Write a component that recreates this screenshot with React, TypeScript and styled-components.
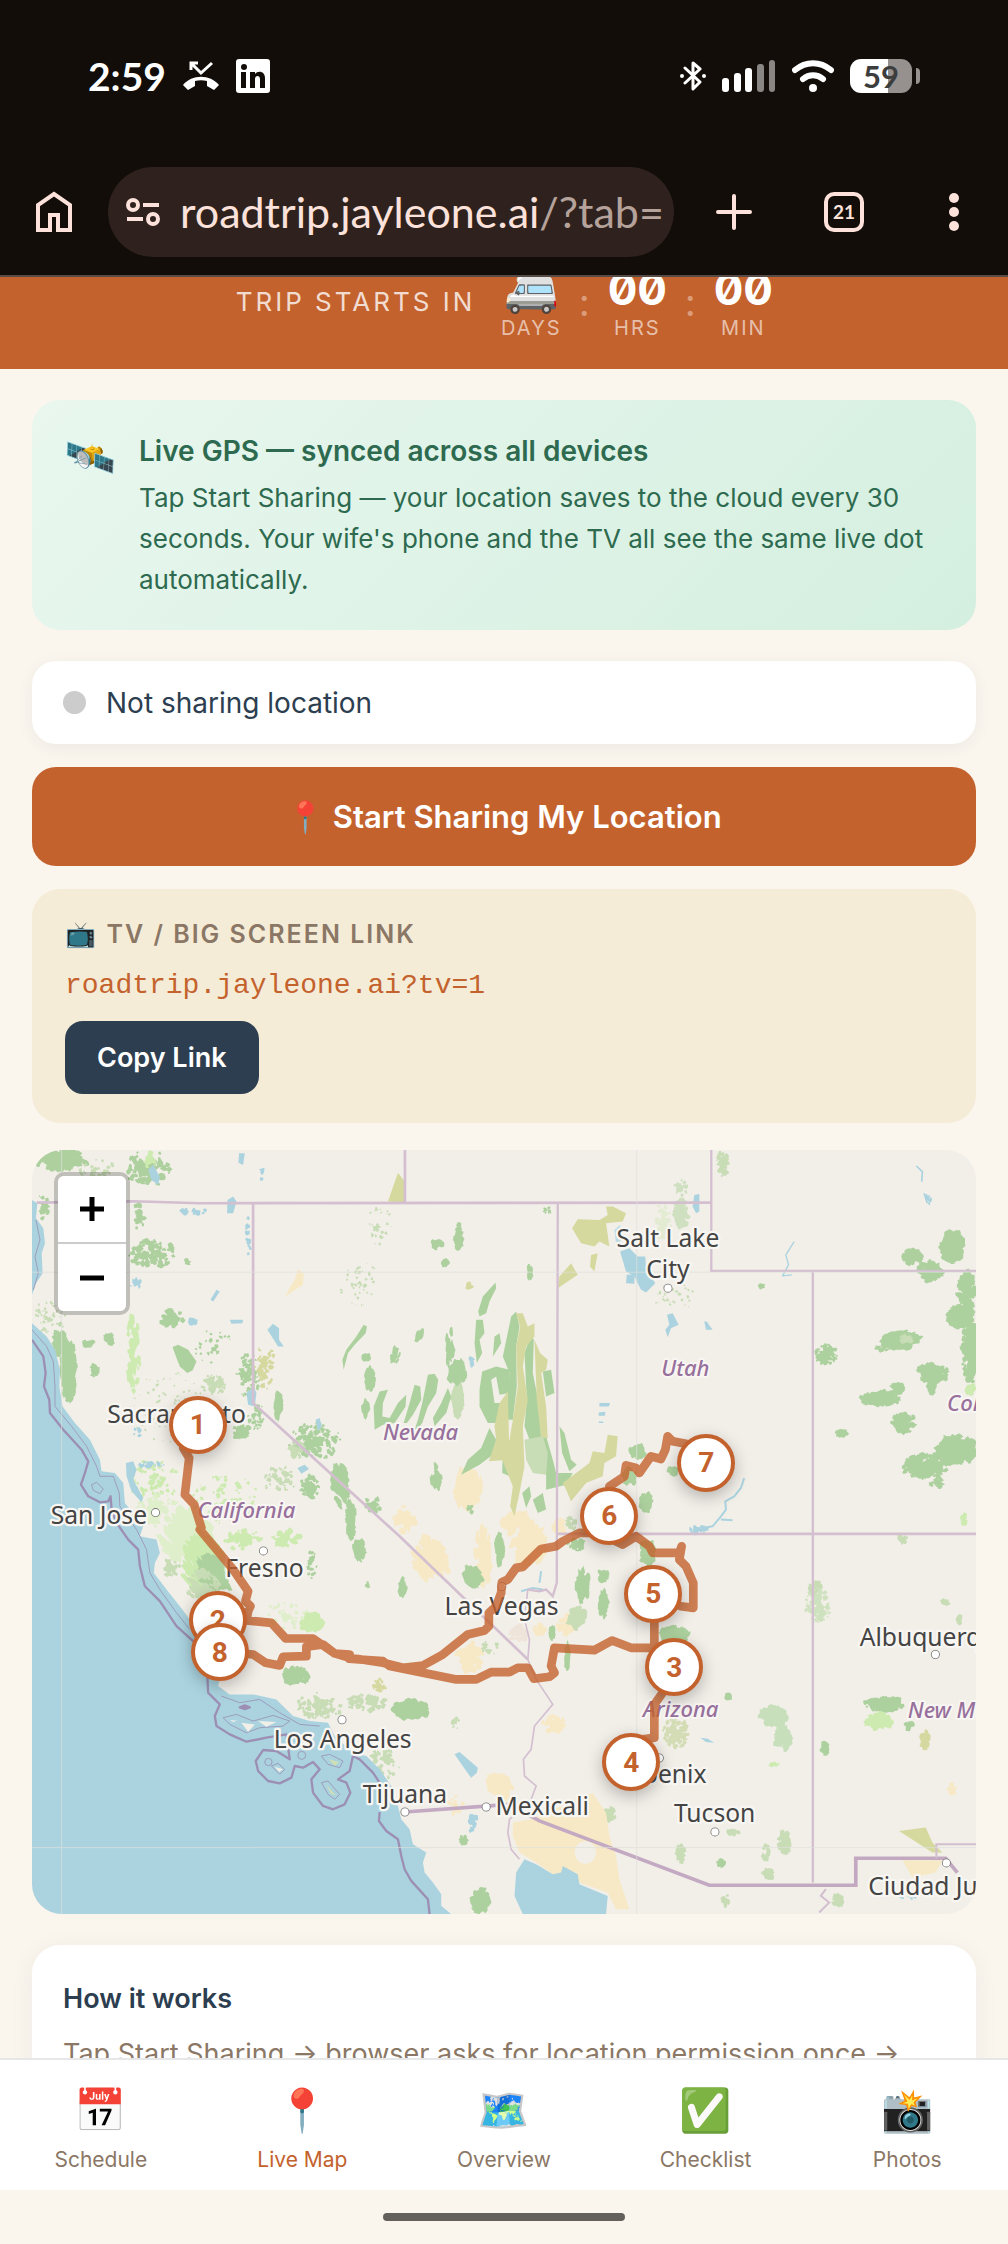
import React from 'react';
import styled, { createGlobalStyle, css } from 'styled-components';

type Point = [number, number];

type Cluster = {
	at: Point;
	spread: Point;
	count: number;
	size: number;
	color: string;
	stretch?: number;
	tilt?: number;
};

const GREEN = '#add19e';
const PALE = '#c8dcb6';
const LIME = '#cdebb0';
const OLIVE = '#d6d99f';
const SAND = '#f7e9c6';
const WATER = '#aad3df';
const BORDER = '#d3bfd0';
const MARITIME = '#9c8fb3';

const clusters: Cluster[] = [
	{ at: [180, 60], spread: [85, 30], count: 46, size: 16, color: GREEN },
	{ at: [290, 110], spread: [70, 50], count: 26, size: 9, color: PALE },
	{ at: [445, 85], spread: [65, 55], count: 34, size: 13, color: GREEN },
	{ at: [450, 60], spread: [15, 30], count: 8, size: 10, color: LIME },
	{ at: [130, 195], spread: [18, 45], count: 10, size: 10, color: GREEN },
	{ at: [420, 225], spread: [18, 50], count: 8, size: 9, color: GREEN },
	{ at: [455, 340], spread: [70, 45], count: 34, size: 13, color: GREEN },
	{ at: [565, 365], spread: [8, 8], count: 3, size: 11, color: GREEN },
	{ at: [180, 600], spread: [18, 50], count: 24, size: 13, color: GREEN },
	{ at: [205, 690], spread: [20, 90], count: 60, size: 14, color: GREEN, stretch: 2 },
	{ at: [150, 530], spread: [50, 50], count: 24, size: 6, color: PALE },
	{ at: [330, 595], spread: [18, 18], count: 8, size: 13, color: GREEN },
	{ at: [265, 610], spread: [18, 10], count: 5, size: 12, color: GREEN },
	{ at: [285, 690], spread: [12, 18], count: 5, size: 11, color: GREEN },
	{ at: [400, 640], spread: [20, 120], count: 34, size: 9, color: LIME, stretch: 2 },
	{ at: [500, 800], spread: [110, 110], count: 40, size: 5, color: PALE },
	{ at: [510, 535], spread: [40, 25], count: 14, size: 14, color: GREEN },
	{ at: [640, 620], spread: [60, 50], count: 14, size: 7, color: GREEN },
	{ at: [640, 735], spread: [40, 30], count: 24, size: 9, color: PALE },
	{ at: [745, 710], spread: [40, 70], count: 40, size: 8, color: GREEN },
	{ at: [795, 680], spread: [30, 70], count: 26, size: 9, color: OLIVE },
	{ at: [835, 795], spread: [8, 40], count: 14, size: 11, color: GREEN, stretch: 2 },
	{ at: [725, 875], spread: [26, 22], count: 12, size: 13, color: GREEN },
	{ at: [770, 830], spread: [25, 40], count: 16, size: 8, color: GREEN },
	{ at: [945, 905], spread: [80, 55], count: 50, size: 10, color: GREEN },
	{ at: [890, 930], spread: [30, 25], count: 10, size: 12, color: PALE },
	{ at: [840, 1020], spread: [50, 40], count: 26, size: 8, color: PALE },
	{ at: [930, 1040], spread: [30, 36], count: 20, size: 12, color: GREEN },
	{ at: [1020, 1030], spread: [24, 70], count: 26, size: 12, color: GREEN, stretch: 2, tilt: -35 },
	{ at: [1055, 1140], spread: [12, 60], count: 16, size: 12, color: GREEN, stretch: 2, tilt: -10 },
	{ at: [1120, 1095], spread: [26, 22], count: 9, size: 12, color: GREEN },
	{ at: [460, 1020], spread: [80, 60], count: 34, size: 9, color: LIME },
	{ at: [680, 1080], spread: [100, 80], count: 34, size: 8, color: LIME },
	{ at: [470, 1110], spread: [70, 50], count: 26, size: 12, color: '#dfeecb' },
	{ at: [560, 1190], spread: [80, 80], count: 44, size: 17, color: '#dfeecb', tilt: -40, stretch: 2 },
	{ at: [610, 1270], spread: [60, 90], count: 40, size: 16, color: LIME, tilt: -40, stretch: 3 },
	{ at: [640, 1310], spread: [40, 60], count: 22, size: 14, color: GREEN, tilt: -40, stretch: 3 },
	{ at: [510, 1280], spread: [30, 30], count: 16, size: 9, color: PALE },
	{ at: [610, 1350], spread: [50, 60], count: 30, size: 10, color: PALE, tilt: -40, stretch: 2 },
	{ at: [730, 1200], spread: [60, 30], count: 22, size: 11, color: LIME },
	{ at: [860, 1200], spread: [40, 30], count: 14, size: 15, color: LIME },
	{ at: [1140, 260], spread: [40, 60], count: 14, size: 6, color: PALE },
	{ at: [1080, 430], spread: [60, 70], count: 20, size: 6, color: PALE },
	{ at: [1378, 290], spread: [8, 38], count: 14, size: 14, color: GREEN },
	{ at: [1312, 312], spread: [22, 14], count: 6, size: 11, color: GREEN },
	{ at: [1335, 368], spread: [6, 8], count: 3, size: 11, color: GREEN },
	{ at: [1410, 438], spread: [12, 10], count: 5, size: 11, color: OLIVE },
	{ at: [1350, 620], spread: [14, 60], count: 14, size: 7, color: GREEN, stretch: 3 },
	{ at: [1260, 585], spread: [12, 20], count: 5, size: 8, color: GREEN, stretch: 2, tilt: 35 },
	{ at: [1100, 650], spread: [12, 12], count: 4, size: 11, color: GREEN },
	{ at: [1110, 720], spread: [12, 30], count: 10, size: 12, color: GREEN, stretch: 2 },
	{ at: [1098, 810], spread: [6, 26], count: 6, size: 10, color: GREEN, stretch: 2 },
	{ at: [1185, 645], spread: [14, 24], count: 6, size: 10, color: GREEN, stretch: 2, tilt: 20 },
	{ at: [1375, 700], spread: [24, 24], count: 12, size: 17, color: GREEN, stretch: 2 },
	{ at: [1375, 780], spread: [14, 50], count: 16, size: 14, color: PALE, stretch: 2 },
	{ at: [1310, 1010], spread: [14, 34], count: 8, size: 12, color: GREEN, stretch: 2, tilt: -20 },
	{ at: [1405, 1050], spread: [40, 60], count: 36, size: 16, color: SAND, stretch: 2 },
	{ at: [1215, 1140], spread: [35, 40], count: 16, size: 16, color: SAND },
	{ at: [1290, 1260], spread: [50, 66], count: 34, size: 17, color: SAND, stretch: 2, tilt: -40 },
	{ at: [1450, 1250], spread: [25, 80], count: 22, size: 13, color: SAND, stretch: 3 },
	{ at: [1410, 1110], spread: [8, 20], count: 5, size: 10, color: GREEN },
	{ at: [1420, 1310], spread: [22, 24], count: 14, size: 15, color: GREEN, tilt: -40, stretch: 2 },
	{ at: [1500, 1230], spread: [10, 44], count: 9, size: 12, color: GREEN, stretch: 3 },
	{ at: [1207, 1345], spread: [4, 22], count: 6, size: 12, color: GREEN, stretch: 2 },
	{ at: [1080, 1235], spread: [12, 34], count: 10, size: 12, color: GREEN, tilt: -25, stretch: 2 },
	{ at: [935, 1270], spread: [16, 50], count: 12, size: 8, color: GREEN },
	{ at: [1105, 1335], spread: [8, 8], count: 3, size: 9, color: GREEN },
	{ at: [935, 1448], spread: [32, 24], count: 24, size: 18, color: LIME },
	{ at: [860, 1430], spread: [70, 40], count: 20, size: 9, color: '#dfeecb' },
	{ at: [888, 1610], spread: [38, 26], count: 40, size: 15, color: GREEN },
	{ at: [960, 1700], spread: [70, 40], count: 34, size: 10, color: PALE },
	{ at: [1100, 1690], spread: [70, 26], count: 26, size: 11, color: PALE },
	{ at: [1235, 1710], spread: [54, 26], count: 44, size: 17, color: GREEN },
	{ at: [1150, 1870], spread: [50, 60], count: 24, size: 10, color: PALE },
	{ at: [1140, 1640], spread: [20, 22], count: 8, size: 10, color: OLIVE },
	{ at: [1365, 1750], spread: [14, 20], count: 6, size: 8, color: PALE },
	{ at: [1410, 1550], spread: [40, 46], count: 30, size: 15, color: SAND },
	{ at: [1500, 1940], spread: [34, 34], count: 18, size: 16, color: SAND, tilt: -40, stretch: 2 },
	{ at: [1370, 2000], spread: [30, 30], count: 9, size: 9, color: SAND },
	{ at: [1392, 2100], spread: [9, 12], count: 8, size: 12, color: GREEN },
	{ at: [1445, 2285], spread: [28, 38], count: 34, size: 14, color: GREEN },
	{ at: [1470, 1525], spread: [30, 20], count: 9, size: 8, color: PALE },
	{ at: [1645, 215], spread: [12, 12], count: 4, size: 8, color: GREEN },
	{ at: [2170, 70], spread: [18, 40], count: 24, size: 10, color: PALE },
	{ at: [2045, 220], spread: [20, 45], count: 26, size: 14, color: '#cfe0c0' },
	{ at: [1990, 250], spread: [25, 60], count: 18, size: 10, color: '#e3ecd2' },
	{ at: [2045, 140], spread: [20, 30], count: 10, size: 8, color: '#cfe0c0' },
	{ at: [2030, 470], spread: [70, 40], count: 16, size: 5, color: PALE },
	{ at: [2290, 440], spread: [8, 6], count: 4, size: 11, color: GREEN },
	{ at: [1592, 400], spread: [6, 20], count: 6, size: 9, color: GREEN, stretch: 2 },
	{ at: [2860, 320], spread: [34, 46], count: 60, size: 18, color: GREEN },
	{ at: [2740, 350], spread: [26, 22], count: 24, size: 15, color: GREEN },
	{ at: [2795, 395], spread: [36, 30], count: 34, size: 15, color: GREEN },
	{ at: [2905, 450], spread: [26, 60], count: 34, size: 16, color: GREEN },
	{ at: [2885, 530], spread: [42, 30], count: 40, size: 17, color: GREEN },
	{ at: [2920, 640], spread: [30, 90], count: 56, size: 17, color: GREEN },
	{ at: [2705, 602], spread: [54, 26], count: 50, size: 12, color: GREEN, tilt: 60, stretch: 2 },
	{ at: [2720, 600], spread: [20, 12], count: 8, size: 10, color: PALE },
	{ at: [2645, 627], spread: [30, 8], count: 10, size: 7, color: GREEN },
	{ at: [2480, 645], spread: [34, 30], count: 38, size: 10, color: GREEN },
	{ at: [2800, 700], spread: [46, 28], count: 44, size: 14, color: GREEN },
	{ at: [2798, 745], spread: [10, 18], count: 10, size: 13, color: GREEN },
	{ at: [2645, 777], spread: [62, 22], count: 46, size: 12, color: GREEN },
	{ at: [2695, 745], spread: [20, 16], count: 12, size: 12, color: GREEN },
	{ at: [2715, 850], spread: [36, 30], count: 36, size: 13, color: GREEN },
	{ at: [2525, 880], spread: [20, 7], count: 9, size: 12, color: GREEN },
	{ at: [2870, 930], spread: [64, 42], count: 64, size: 17, color: GREEN },
	{ at: [2780, 980], spread: [68, 36], count: 56, size: 14, color: GREEN },
	{ at: [2815, 1030], spread: [24, 12], count: 9, size: 10, color: GREEN },
	{ at: [2915, 750], spread: [12, 12], count: 8, size: 13, color: LIME },
	{ at: [2895, 1140], spread: [6, 20], count: 8, size: 10, color: LIME },
	{ at: [1940, 1085], spread: [14, 30], count: 24, size: 14, color: GREEN },
	{ at: [1915, 935], spread: [22, 20], count: 16, size: 15, color: GREEN },
	{ at: [1890, 1010], spread: [20, 26], count: 14, size: 13, color: GREEN },
	{ at: [2020, 995], spread: [16, 14], count: 8, size: 12, color: GREEN },
	{ at: [1715, 1150], spread: [20, 20], count: 8, size: 10, color: PALE },
	{ at: [1550, 1150], spread: [50, 30], count: 14, size: 15, color: SAND, tilt: 40, stretch: 2 },
	{ at: [1680, 1160], spread: [20, 26], count: 12, size: 15, color: SAND },
	{ at: [1590, 1220], spread: [50, 56], count: 30, size: 17, color: SAND, stretch: 2, tilt: 30 },
	{ at: [1620, 1470], spread: [18, 14], count: 10, size: 13, color: SAND },
	{ at: [1700, 1455], spread: [28, 28], count: 20, size: 14, color: SAND },
	{ at: [1560, 1480], spread: [30, 26], count: 12, size: 13, color: '#efe4da' },
	{ at: [1730, 1215], spread: [26, 18], count: 14, size: 12, color: GREEN },
	{ at: [1750, 1340], spread: [20, 50], count: 26, size: 11, color: GREEN, stretch: 2 },
	{ at: [1812, 1310], spread: [16, 18], count: 12, size: 13, color: GREEN },
	{ at: [1813, 1395], spread: [10, 40], count: 18, size: 13, color: GREEN, stretch: 2 },
	{ at: [1730, 1435], spread: [24, 34], count: 22, size: 16, color: PALE },
	{ at: [1657, 1480], spread: [6, 20], count: 6, size: 9, color: GREEN, stretch: 2 },
	{ at: [1705, 1550], spread: [5, 46], count: 10, size: 9, color: GREEN, stretch: 3 },
	{ at: [1945, 1240], spread: [20, 44], count: 30, size: 14, color: GREEN },
	{ at: [2025, 1485], spread: [42, 20], count: 38, size: 17, color: GREEN },
	{ at: [2450, 1350], spread: [20, 24], count: 26, size: 10, color: PALE },
	{ at: [2455, 1400], spread: [40, 54], count: 44, size: 9, color: '#cfe2bf' },
	{ at: [1660, 1755], spread: [34, 28], count: 14, size: 13, color: SAND },
	{ at: [2030, 1780], spread: [40, 46], count: 50, size: 9, color: '#d3dcb4' },
	{ at: [2325, 1730], spread: [40, 28], count: 44, size: 16, color: '#c7dfbb' },
	{ at: [2350, 1795], spread: [24, 38], count: 32, size: 14, color: '#c7dfbb' },
	{ at: [2188, 1670], spread: [6, 10], count: 6, size: 10, color: GREEN },
	{ at: [2477, 1828], spread: [10, 18], count: 10, size: 12, color: GREEN },
	{ at: [2655, 1695], spread: [58, 20], count: 44, size: 14, color: GREEN },
	{ at: [2640, 1745], spread: [40, 22], count: 30, size: 15, color: LIME },
	{ at: [2730, 1760], spread: [12, 12], count: 8, size: 11, color: GREEN },
	{ at: [2777, 1800], spread: [12, 28], count: 18, size: 12, color: OLIVE },
	{ at: [2835, 1390], spread: [16, 8], count: 5, size: 9, color: PALE },
	{ at: [2880, 1440], spread: [8, 16], count: 6, size: 9, color: PALE },
	{ at: [2710, 1200], spread: [16, 12], count: 7, size: 11, color: PALE },
	{ at: [1830, 2025], spread: [18, 20], count: 14, size: 12, color: PALE },
	{ at: [2045, 2140], spread: [12, 34], count: 12, size: 12, color: PALE },
	{ at: [2355, 2110], spread: [16, 40], count: 24, size: 12, color: PALE },
	{ at: [2200, 2080], spread: [20, 7], count: 7, size: 9, color: PALE },
	{ at: [2165, 2170], spread: [10, 10], count: 6, size: 11, color: GREEN },
	{ at: [2300, 2140], spread: [12, 24], count: 9, size: 9, color: PALE },
	{ at: [2305, 2205], spread: [18, 14], count: 9, size: 12, color: PALE },
	{ at: [2180, 2285], spread: [12, 20], count: 6, size: 9, color: PALE },
	{ at: [2515, 2285], spread: [18, 18], count: 12, size: 12, color: PALE },
	{ at: [2860, 1950], spread: [10, 20], count: 7, size: 11, color: SAND },
	{ at: [2320, 1875], spread: [20, 4], count: 6, size: 8, color: LIME },
	{ at: [585, 215], spread: [60, 10], count: 5, size: 9, color: WATER },
	{ at: [745, 290], spread: [10, 60], count: 5, size: 8, color: WATER },
	{ at: [785, 100], spread: [6, 30], count: 3, size: 8, color: WATER },
	{ at: [410, 430], spread: [25, 14], count: 8, size: 7, color: WATER },
	{ at: [580, 545], spread: [14, 8], count: 4, size: 10, color: WATER },
	{ at: [440, 975], spread: [60, 8], count: 14, size: 8, color: WATER },
	{ at: [415, 875], spread: [14, 16], count: 4, size: 7, color: WATER },
	{ at: [1417, 660], spread: [3, 26], count: 3, size: 9, color: WATER },
	{ at: [2100, 1172], spread: [30, 12], count: 9, size: 9, color: WATER },
	{ at: [2785, 180], spread: [12, 16], count: 5, size: 7, color: WATER },
	{ at: [1425, 2050], spread: [18, 26], count: 5, size: 13, color: WATER },
	{ at: [2730, 2270], spread: [80, 10], count: 4, size: 7, color: WATER },
];

// small seeded generator so the ground cover is the same on every render
const randomFrom = (seed: number) => () => {
	seed = (seed * 16807) % 2147483647;
	return seed / 2147483647;
};

const clusterPath = ({ at, spread, count, size, stretch = 1, tilt = 0 }: Cluster) => {
	const random = randomFrom(at[0] * 31 + at[1] * 17 + 7);
	const angle = (tilt * Math.PI) / 180;
	let path = '';
	for (let i = 0; i < count * 2; i++) {
		const turn = random() * Math.PI * 2;
		const reach = Math.pow(random(), 0.6);
		const cx = at[0] + Math.cos(turn) * spread[0] * reach;
		const cy = at[1] + Math.sin(turn) * spread[1] * reach;
		const scale = size * (1.2 - reach * 0.6) * (0.4 + random() * 0.7);
		for (let k = 0; k < 9; k++) {
			const a = (k / 9) * Math.PI * 2;
			const r = scale * (0.6 + random() * 0.7);
			const dx = Math.cos(a) * r;
			const dy = Math.sin(a) * r * stretch;
			const x = cx + dx * Math.cos(angle) - dy * Math.sin(angle);
			const y = cy + dx * Math.sin(angle) + dy * Math.cos(angle);
			path += `${k ? 'L' : 'M'}${x.toFixed(0)} ${y.toFixed(0)}`;
		}
		path += 'Z';
	}
	return path;
};

const stops = [
	{ name: '1', x: 166, y: 275 },
	{ name: '2', x: 186, y: 471 },
	{ name: '3', x: 643, y: 518 },
	{ name: '4', x: 600, y: 613 },
	{ name: '5', x: 622, y: 444 },
	{ name: '6', x: 578, y: 366 },
	{ name: '7', x: 675, y: 313 },
	{ name: '8', x: 188, y: 503 },
];

const cities = [
	{ name: 'Sacramento', x: 530, y: 850 },
	{ name: 'San Jose', x: 297, y: 1152, dot: [467, 1119] },
	{ name: 'Fresno', x: 794, y: 1312, dot: [791, 1234] },
	{ name: 'Las Vegas', x: 1506, y: 1428, dot: [1507, 1341] },
	{ name: 'Los Angeles', x: 1029, y: 1825, dot: [1027, 1741] },
	{ name: 'Tijuana', x: 1216, y: 1992, dot: [1216, 2018] },
	{ name: 'Mexicali', x: 1628, y: 2028, dot: [1460, 2003] },
	{ name: 'Salt Lake', x: 2006, y: 322 },
	{ name: 'City', x: 2006, y: 414, dot: [2006, 445] },
	{ name: 'Phoenix', x: 1981, y: 1931, dot: [1980, 1856] },
	{ name: 'Tucson', x: 2146, y: 2049, dot: [2147, 2078] },
	{ name: 'Albuquerque', x: 2808, y: 1520, dot: [2809, 1545] },
	{ name: 'Ciudad Juárez', x: 2845, y: 2266, dot: [2842, 2171] },
];

const states = [
	{ name: 'Nevada', x: 1263, y: 901 },
	{ name: 'California', x: 740, y: 1136 },
	{ name: 'Utah', x: 2058, y: 709 },
	{ name: 'Colorado', x: 2980, y: 814 },
	{ name: 'Arizona', x: 2044, y: 1734 },
	{ name: 'New Mexico', x: 2904, y: 1735 },
];

const tabs = [
	{ icon: '📅', label: 'Schedule' },
	{ icon: '📍', label: 'Live Map', active: true },
	{ icon: '🗺️', label: 'Overview' },
	{ icon: '✅', label: 'Checklist' },
	{ icon: '📸', label: 'Photos' },
];

const RouteMap = () => (
	<MapSvg viewBox="96 30 2835 2295" preserveAspectRatio="xMidYMid slice" aria-hidden="true">
		<rect x="96" y="30" width="2835" height="2295" fill="#f2efe9" />
		{clusters.map(c => (
			<path key={`${c.at}`} d={clusterPath(c)} fill={c.color} />
		))}
		{/* ranges and plains with a shape of their own */}
		<g fill={GREEN}>
			<path d="M518 622L535 615 565 630 590 665 578 692 562 700 540 680 530 655Z" />
			<path d="M1028 660L1040 630 1070 590 1092 555 1102 560 1098 580 1065 615 1045 640 1032 690Z" />
			<path d="M1436 515L1450 470 1488 428 1490 445 1470 485 1460 520 1440 530Z" />
			<path d="M1430 540L1450 540 1455 580 1440 600 1448 640 1432 670 1425 610Z" />
			<path d="M1485 590L1500 580 1505 610 1480 650Z" />
			<path d="M1125 870L1122 800 1140 755 1165 750 1150 790 1148 830 1170 835 1195 790 1220 765 1218 800 1185 850 1150 855Z" />
			<path d="M1212 850L1230 790 1245 735 1262 740 1265 780 1240 825 1222 850Z" />
			<path d="M1255 840L1268 790 1285 705 1305 702 1316 720 1310 760 1285 800 1268 850 1240 885Z" />
			<path d="M1300 835L1325 790 1345 745 1355 770 1340 820 1305 860Z" />
			<path d="M1440 750L1448 695 1490 680 1530 690 1530 760 1500 765 1490 710 1475 720 1485 790 1510 790 1490 850 1465 850 1440 800Z" />
			<path d="M1385 1005L1405 960 1445 925 1470 865 1490 900 1480 945 1440 975Z" />
			<path d="M1535 530L1550 515 1560 560 1550 620 1552 740 1540 840 1520 840 1530 700 1510 650Z" />
			<path d="M1575 640L1595 585 1603 600 1600 700 1620 800 1625 900 1590 900 1575 860 1582 780Z" />
			<path d="M1630 695L1655 690 1665 760 1640 770Z" />
			<path d="M1610 895L1640 890 1660 960 1670 1000 1720 1000 1700 1035 1640 1050 1640 1005Z" />
			<path d="M1680 860L1695 880 1715 960 1732 975 1710 995 1688 940Z" />
			<path d="M1568 1060L1590 1040 1595 1070 1580 1105Z" />
			<path d="M1600 1080L1630 1060 1640 1110 1615 1120Z" />
			<path d="M1510 940L1530 960 1530 1010 1508 1000Z" />
		</g>
		<g fill={OLIVE}>
			<path d="M1165 185L1195 98 1216 125 1216 188Z" />
			<path d="M1550 520L1570 520 1585 560 1605 550 1605 590 1580 620 1570 680 1585 780 1570 860 1575 980 1560 1060 1545 1130 1532 1100 1540 1040 1500 940 1530 900 1540 840 1555 740 1550 620 1562 560Z" />
			<path d="M1605 600L1622 640 1645 660 1640 690 1625 700 1640 800 1645 895 1625 895 1612 780Z" />
			<path d="M1485 860L1500 790 1525 755 1530 960 1468 965 1490 900Z" />
			<path d="M1718 265L1735 238 1800 240 1825 225 1820 200 1840 200 1880 220 1870 245 1820 250 1830 320 1800 305 1785 320 1745 310Z" />
			<path d="M1675 445L1680 410 1715 370 1735 405Z" />
			<path d="M1775 345L1795 340 1785 395 1772 380Z" />
			<path d="M1690 1030L1770 970 1780 935 1815 940 1825 885 1855 890 1850 950 1815 970 1810 1010 1760 1030 1715 1085 1700 1050Z" />
			<path d="M2700 2075L2780 2065 2800 2110 2830 2140 2800 2140Z" />
		</g>
		<path fill={PALE} d="M1575 900L1630 890 1645 940 1640 1005 1600 1000 1580 960Z" />
		<g fill={SAND}>
			<path d="M855 470L885 420 895 388 912 400 910 435Z" />
			<path d="M1540 2050L1595 2040 1780 1960 1820 2020 1830 2090 1850 2150 1860 2220 1890 2310 1850 2310 1825 2260 1740 2230 1730 2200 1660 2205 1610 2170 1560 2140 1540 2090Z" />
			<path d="M1500 1930L1530 1945 1530 1985 1500 1990Z" />
			<path d="M2710 2163L2830 2163 2810 2200 2740 2215Z" />
		</g>
		<ellipse cx="1758" cy="2140" rx="32" ry="34" fill="#f2efe9" />

		<g fill={WATER}>
			<path d="M96 180L112 190 108 235 130 265 135 310 125 340 128 400 108 430 96 465Z" />
			<path d="M96 550L140 590 165 630 180 690 178 740 188 800 225 850 270 900 300 960 305 995 345 1000 370 1030 375 1090 400 1120 430 1160 420 1190 470 1200 480 1240 465 1270 462 1300 500 1350 540 1400 570 1440 600 1480 620 1570 660 1620 655 1640 690 1665 760 1665 830 1680 880 1730 930 1745 985 1750 1005 1790 1060 1840 1100 1850 1140 1890 1175 1940 1195 2000 1205 2040 1230 2070 1240 2115 1280 2140 1270 2170 1275 2200 1300 2230 1325 2265 1325 2300 1355 2325 96 2325Z" />
			<path d="M378 970L400 965 410 990 400 1020 430 1075 425 1088 395 1055 380 1010Z" />
			<path d="M740 760L762 742 770 760 765 800 745 795Z" />
			<path d="M683 180L700 170 710 185 700 220 682 220Z" />
			<path d="M718 40L735 40 730 75 716 68Z" />
			<path d="M445 90L460 75 480 110 475 135 455 120Z" />
			<path d="M803 570L820 552 838 565 838 600 852 620 835 620Z" />
			<path d="M690 540L730 540 728 550 695 552Z" />
			<path d="M640 485L632 480 650 450 660 455 650 470Z" />
			<path d="M893 985L915 975 928 988 905 1002Z" />
			<path d="M948 840L960 835 966 860 955 875Z" />
			<path d="M1862 335L1890 325 1915 350 1938 350 1940 390 1968 430 1940 458 1925 450 1905 410 1880 395Z" />
			<path d="M1845 270L1862 255 1870 300 1850 310Z" opacity=".7" />
			<path d="M1882 405L1905 405 1905 432 1880 430Z" />
			<path d="M2003 525L2020 520 2038 555 2015 565 2005 592 1998 570 2010 555Z" />
			<path d="M2085 165L2100 162 2100 215 2090 220 2080 200Z" />
			<path d="M2115 545L2122 545 2140 570 2120 570Z" />
			<path d="M1800 790L1832 790 1828 800 1800 800ZM1798 818L1818 816 1816 828 1798 828ZM1798 845L1812 845 1812 850 1798 850Z" />
			<path d="M1365 1845L1380 1838 1435 1885 1432 1900 1415 1915 1400 1895Z" />
			<path d="M1575 2160L1610 2175 1660 2205 1685 2200 1690 2180 1735 2205 1740 2235 1825 2270 1820 2325 1570 2325 1545 2270 1550 2200Z" />
			<path d="M2103 1795L2125 1798 2145 1810 2120 1808Z" />
		</g>
		<g fill="none" stroke={WATER} strokeWidth="6" strokeLinejoin="round">
			<path d="M2080 1180L2110 1165 2140 1160 2165 1130 2180 1110 2178 1085 2205 1070 2225 1045 2235 1015M2165 1140L2200 1142" />
			<path d="M2385 305L2360 345 2368 375 2350 408 2378 405" strokeWidth="4" />
			<path d="M2752 78L2770 95 2768 125M2775 160L2785 190" strokeWidth="5" />
			<path d="M1625 1295L1620 1330M1565 1355L1600 1345 1630 1350" />
		</g>

		<g fill="none" stroke={MARITIME} strokeWidth="7" strokeLinejoin="round">
			<path d="M96 600L130 650 137 700 132 740 148 780 150 820 190 870 245 930 265 965 255 1000 243 1035 265 1070 300 1088 325 1085 332 1070 335 1110 350 1150 385 1200 415 1230 420 1280 435 1340 480 1385 530 1460 580 1505 620 1560 625 1660 660 1695 645 1730 650 1760 690 1785 740 1807 800 1795 860 1785 870 1860 830 1835 790 1832 768 1865 775 1895 805 1925 840 1932 875 1915 885 1880 910 1885 940 1868 960 1890 935 1920 940 1960 970 2000 1000 2010 1035 1995 1052 1960 1040 1930 1015 1920 1050 1895 1060 1850 1080 1860 1120 1900 1140 1930" />
			<path d="M1140 2018L1138 2045 1160 2075 1195 2100 1205 2150 1215 2190 1235 2225 1285 2280 1290 2325" />
			<path d="M720 1704L735 1698 750 1704 735 1709Z" fill={MARITIME} />
		</g>
		<g fill="none" stroke={MARITIME} strokeWidth="3" strokeLinejoin="round" opacity=".8">
			<path d="M108 240L120 300 105 350 115 400 100 450M96 570L140 620 160 665 165 740 165 800 215 860 260 920 290 980 300 1010 340 1010 358 1060 360 1100 410 1170 440 1230 450 1300 480 1350 530 1420 570 1470M665 1670L720 1690 780 1680 840 1720 900 1755 960 1760M275 1035L290 1028 310 1048 300 1062 280 1052Z" />
			<path d="M670 1735L710 1725 760 1745 820 1728 870 1745 850 1760 780 1765 740 1780 690 1755ZM965 1850L990 1845 1030 1865 1020 1885 985 1875ZM965 1930L985 1925 1020 1965 1005 1980 985 1965ZM815 1880L835 1872 855 1890 840 1905Z" />
			<circle cx="806" cy="1868" r="11" />
			<circle cx="906" cy="1848" r="12" />
		</g>
		<g fill="#f2efe9">
			<path d="M725 1750L765 1755 745 1778Z" />
			<path d="M775 1745L830 1748 800 1762Z" />
			<path d="M690 1742L712 1744 700 1748ZM825 1882L850 1890 838 1898Z" />
		</g>
		<g fill="#cfe0b4">
			<path d="M988 1860L1018 1868 1005 1880Z" />
			<path d="M978 1935L1008 1968 995 1965Z" />
		</g>

		<g fill="none" stroke={BORDER} strokeWidth="8">
			<path d="M110 188L400 184 600 190 2136 188M1216 30V188M760 188V790L1200 1190 1585 1560" />
			<path d="M2136 30V393H2931M2441 393V2230M1675 190L1672 1330 1660 1370 1640 1350 1620 1355 1585 1350" strokeWidth="7" />
			<path d="M1672 1183H2931" />
			<path d="M1585 1350L1575 1440 1590 1500 1585 1560 1610 1620 1660 1695 1605 1760 1595 1830 1572 1860 1575 1910 1610 1940 1595 1980 1530 2040 1525 2080 1535 2130 1560 2160" strokeWidth="5" />
			<path d="M1215 2018L1530 1995 1620 2045 2130 2238H2570V2157H2840L2875 2200" stroke="#c3a9c2" strokeWidth="11" />
			<path d="M2812 2157V2115H2931M2480 2250L2465 2270 2490 2290 2460 2320" strokeWidth="6" />
		</g>
		<g stroke="#dfe0dc" strokeWidth="3">
			<path d="M96 397H2931M96 2125H2931M185 30V2325M1912 30V2325" opacity=".7" />
		</g>

		<g fontFamily="'Noto Sans', sans-serif" textAnchor="middle" strokeLinejoin="round" paintOrder="stroke">
			{cities.map(city => (
				<g key={city.name}>
					{city.dot && (
						<circle cx={city.dot[0]} cy={city.dot[1]} r="11" fill="#fff" stroke="#777" strokeWidth="5" />
					)}
					<text x={city.x} y={city.y} fontSize="74" fill="#444" stroke="#f8f6f2" strokeWidth="14">
						{city.name}
					</text>
				</g>
			))}
			{states.map(state => (
				<text
					key={state.name}
					x={state.x}
					y={state.y}
					fontSize="66"
					fontStyle="italic"
					fontWeight="500"
					fill="#97709c"
					stroke="#f8f6f2"
					strokeWidth="12"
				>
					{state.name}
				</text>
			))}
		</g>

		<g fill="none" stroke="#c4622d" strokeWidth="26" strokeLinejoin="round" strokeLinecap="round" opacity=".8">
			<path d="M550 925L568 955 555 1065 583 1095 605 1165 600 1170 700 1290 745 1355 737 1385 752 1400 745 1415 740 1443 815 1450 858 1497 940 1497 1005 1542 1050 1545 1048 1558 1150 1565 1170 1580 1370 1620 1430 1620 1475 1598 1530 1598 1555 1585 1585 1585 1603 1618 1650 1612 1665 1600 1655 1580 1665 1525 1785 1532 1838 1503 1895 1525 1965 1525 1965 1370 2045 1400 2082 1405 2082 1330 2060 1280 2040 1260 2047 1220 2040 1240 1960 1240 1950 1220 1910 1190 1870 1215 1800 1180 1740 1180 1690 1205 1670 1220 1625 1228 1570 1282 1550 1285 1525 1320 1507 1328 1505 1360 1490 1400 1468 1420 1468 1460 1455 1473 1405 1485 1330 1545 1270 1578 1210 1585 1150 1570 1050 1555 1005 1542 970 1515 920 1522 920 1550 850 1552 840 1578 798 1570 760 1545 700 1540" />
			<path d="M1965 1525L2025 1585 1990 1660 1965 1695 1965 1795 1930 1800M1830 1040L1875 1010 1880 977 1910 985 1920 1000 1955 950 1985 958 1998 930 2005 890 2020 905 2060 912" />
		</g>
	</MapSvg>
);

const App = () => {
	return (
		<Screen>
			<GlobalStyle />
			<StatusBar>
				<StatusGroup>
					<Clock>2:59</Clock>
					<svg width="38" height="30" viewBox="0 0 38 30" fill="none" aria-label="Missed call">
						<path d="M9 9V2h7M10 3l9 9L30 2" stroke="#fff" strokeWidth="3" />
						<path d="M1 24C10 13 28 13 37 24l-5 5-7-4v-5c-4-1-8-1-12 0v5l-7 4z" fill="#fff" />
					</svg>
					<svg width="34" height="34" viewBox="0 0 34 34" aria-label="LinkedIn">
						<rect width="34" height="34" rx="3" fill="#fff" />
						<g fill="#120d09">
							<circle cx="8" cy="8" r="3" />
							<path d="M5 13h5v16H5zM14 13h5v2c3-4 10-3 10 4v10h-5v-9c0-4-5-4-5 0v9h-5z" />
						</g>
					</svg>
				</StatusGroup>
				<StatusGroup>
					<svg width="26" height="30" viewBox="0 0 26 30" fill="none" aria-label="Bluetooth">
						<path d="M5 7l15 14-7 7V2l7 6L5 22" stroke="#fff" strokeWidth="3" strokeLinejoin="round" strokeLinecap="round" />
						<circle cx="2" cy="15" r="2" fill="#fff" />
						<circle cx="24" cy="15" r="2" fill="#fff" />
					</svg>
					<svg width="54" height="32" viewBox="0 0 54 32" aria-label="Signal">
						<g fill="#fff">
							<rect y="18" width="7" height="14" rx="3" />
							<rect x="12" y="13" width="7" height="19" rx="3" />
							<rect x="23" y="8" width="7" height="24" rx="3" />
							<rect x="35" y="4" width="7" height="28" rx="3" opacity=".5" />
							<rect x="47" width="6" height="32" rx="3" opacity=".5" />
						</g>
					</svg>
					<svg width="42" height="32" viewBox="0 0 42 32" fill="none" aria-label="Wi-Fi">
						<path d="M3 10C14 1 28 1 39 10M11 19c6-5 14-5 20 0" stroke="#fff" strokeWidth="6" strokeLinecap="round" />
						<circle cx="21" cy="28" r="4" fill="#fff" />
					</svg>
					<Battery>
						<BatteryBody>59</BatteryBody>
						<BatteryTip />
					</Battery>
				</StatusGroup>
			</StatusBar>

			<Toolbar>
				<ToolButton aria-label="Home">
					<svg width="36" height="42" viewBox="0 0 36 42" fill="none" stroke="#fce2da" strokeWidth="4">
						<path d="M2 39V14L18 3l16 11v25H22V24h-8v15z" />
					</svg>
				</ToolButton>
				<AddressBar>
					<svg width="34" height="28" viewBox="0 0 34 28" fill="none" stroke="#fce2da" strokeWidth="4">
						<circle cx="7" cy="7" r="5" />
						<circle cx="27" cy="21" r="5" />
						<path d="M17 7h16M1 21h16" />
					</svg>
					<Url>
						roadtrip.jayleone.ai<UrlRest>/?tab=</UrlRest>
					</Url>
				</AddressBar>
				<ToolActions>
					<ActionButton aria-label="New tab">
						<svg width="36" height="36" viewBox="0 0 36 36" stroke="#fce2da" strokeWidth="4" strokeLinecap="round">
							<path d="M18 2v32M2 18h32" />
						</svg>
					</ActionButton>
					<ActionButton aria-label="Open tabs">
						<TabCount>21</TabCount>
					</ActionButton>
					<ActionButton aria-label="Menu">
						<svg width="10" height="38" viewBox="0 0 10 38" fill="#fce2da">
							<circle cx="5" cy="5" r="5" />
							<circle cx="5" cy="19" r="5" />
							<circle cx="5" cy="33" r="5" />
						</svg>
					</ActionButton>
				</ToolActions>
			</Toolbar>

			<Page>
				<Banner>
					<Countdown>
						<CountdownTitle>TRIP STARTS IN</CountdownTitle>
						<Unit>
							<UnitValue>🚐</UnitValue>
							<UnitLabel>DAYS</UnitLabel>
						</Unit>
						<Colon>:</Colon>
						<Unit>
							<UnitValue>00</UnitValue>
							<UnitLabel>HRS</UnitLabel>
						</Unit>
						<Colon>:</Colon>
						<Unit>
							<UnitValue>00</UnitValue>
							<UnitLabel>MIN</UnitLabel>
						</Unit>
					</Countdown>
				</Banner>

				<Content>
					<GpsCard>
						<GpsIcon>🛰️</GpsIcon>
						<div>
							<GpsTitle>Live GPS — synced across all devices</GpsTitle>
							<GpsText>
								Tap Start Sharing — your location saves to the cloud every 30 seconds. Your wife's phone and the TV all
								see the same live dot automatically.
							</GpsText>
						</div>
					</GpsCard>

					<SharingStatus>
						<StatusDot />
						Not sharing location
					</SharingStatus>

					<ShareButton>📍 Start Sharing My Location</ShareButton>

					<TvCard>
						<TvTitle>📺 TV / BIG SCREEN LINK</TvTitle>
						<TvLink href="#tv">roadtrip.jayleone.ai?tv=1</TvLink>
						<CopyButton>Copy Link</CopyButton>
					</TvCard>

					<MapFrame>
						<RouteMap />
						{stops.map(stop => (
							<Marker key={stop.name} $x={stop.x} $y={stop.y}>
								{stop.name}
							</Marker>
						))}
						<ZoomControl>
							<ZoomButton aria-label="Zoom in">
								<svg width="24" height="24" viewBox="0 0 24 24" stroke="#000" strokeWidth="5">
									<path d="M12 0v24M0 12h24" />
								</svg>
							</ZoomButton>
							<ZoomButton aria-label="Zoom out">
								<svg width="24" height="24" viewBox="0 0 24 24" stroke="#000" strokeWidth="5">
									<path d="M0 12h24" />
								</svg>
							</ZoomButton>
						</ZoomControl>
					</MapFrame>

					<HowCard>
						<HowTitle>How it works</HowTitle>
						<HowText>Tap Start Sharing → browser asks for location permission once →</HowText>
					</HowCard>
				</Content>
			</Page>

			<TabBar>
				{tabs.map(tab => (
					<TabItem key={tab.label} $active={tab.active}>
						<TabIcon>{tab.icon}</TabIcon>
						{tab.label}
					</TabItem>
				))}
			</TabBar>
			<GestureArea>
				<GesturePill />
			</GestureArea>
		</Screen>
	);
};

const GlobalStyle = createGlobalStyle`
	* {
		box-sizing: border-box;
	}

	body {
		margin: 0;
		background: #faf5ed;
		font-family: Inter, 'Noto Color Emoji', sans-serif;
	}

	button {
		border: 0;
		padding: 0;
		background: none;
		font-family: inherit;
		cursor: pointer;
	}

	svg {
		display: block;
		flex-shrink: 0;
	}
`;

const Screen = styled.div`
	height: 100vh;
	display: flex;
	flex-direction: column;
`;

const StatusBar = styled.header`
	height: 151px;
	flex-shrink: 0;
	padding: 0 88px;
	display: flex;
	align-items: center;
	justify-content: space-between;
	background: #120d09;
	color: #fff;
	font-family: Lato, sans-serif;
`;

const StatusGroup = styled.div`
	display: flex;
	align-items: center;
	gap: 16px;
`;

const Clock = styled.span`
	font-size: 39px;
	font-weight: 700;
`;

const Battery = styled.div`
	display: flex;
	align-items: center;
	gap: 4px;
`;

const BatteryBody = styled.div`
	width: 62px;
	height: 34px;
	border-radius: 11px;
	background: linear-gradient(90deg, #fff 62%, #96918e 62%);
	color: #3c3d3d;
	font-size: 31px;
	font-weight: 700;
	line-height: 34px;
	text-align: center;
`;

const BatteryTip = styled.div`
	width: 4px;
	height: 16px;
	border-radius: 0 4px 4px 0;
	background: #96918e;
`;

const Toolbar = styled.div`
	height: 126px;
	flex-shrink: 0;
	padding: 16px 30px 18px 36px;
	display: flex;
	align-items: center;
	gap: 36px;
	border-bottom: 2px solid #564b46;
	background: #120d09;
	font-family: Lato, sans-serif;
`;

const ToolButton = styled.button`
	display: flex;
	align-items: center;
	justify-content: center;
`;

const ActionButton = styled(ToolButton)`
	width: 48px;
	height: 48px;
`;

const AddressBar = styled.div`
	flex: 1;
	min-width: 0;
	height: 90px;
	padding: 0 12px 0 18px;
	display: flex;
	align-items: center;
	gap: 20px;
	border-radius: 45px;
	background: #2f221e;
`;

const Url = styled.span`
	overflow: hidden;
	white-space: nowrap;
	color: #fce2da;
	font-size: 43px;
	line-height: 54px;
`;

const UrlRest = styled.span`
	color: #b5a39b;
`;

const ToolActions = styled.div`
	width: 268px;
	display: flex;
	align-items: center;
	justify-content: space-between;
`;

const TabCount = styled.span`
	width: 40px;
	height: 40px;
	border: 4px solid #fce2da;
	border-radius: 10px;
	color: #fce2da;
	font-size: 19px;
	font-weight: 700;
	line-height: 32px;
`;

const Page = styled.main`
	flex: 1;
	min-height: 0;
	overflow: hidden;
`;

const Banner = styled.section`
	height: 92px;
	padding-bottom: 29px;
	display: flex;
	align-items: flex-end;
	justify-content: center;
	overflow: hidden;
	background: #c4622d;
	color: #fff;
`;

const Countdown = styled.div`
	display: flex;
	align-items: center;
	gap: 19px;
`;

const CountdownTitle = styled.span`
	margin-right: 8px;
	color: rgba(255, 255, 255, 0.8);
	font-size: 26px;
	letter-spacing: 3px;
`;

const Unit = styled.div`
	width: 58px;
	display: flex;
	flex-direction: column;
	align-items: center;
`;

const UnitValue = styled.span`
	font-feature-settings: 'zero';
	font-size: 44px;
	font-weight: 700;
	line-height: 54px;
`;

const UnitLabel = styled.span`
	color: rgba(255, 255, 255, 0.6);
	font-size: 20px;
	letter-spacing: 2px;
	line-height: 24px;
`;

const Colon = styled.span`
	width: 10px;
	color: rgba(255, 255, 255, 0.4);
	font-family: Lato, sans-serif;
	font-size: 40px;
	text-align: center;
`;

const Content = styled.div`
	padding: 31px 32px;
	display: flex;
	flex-direction: column;
`;

const GpsCard = styled.section`
	margin-bottom: 31px;
	padding: 31px 32px 30px;
	display: flex;
	gap: 24px;
	border-radius: 28px;
	background: linear-gradient(135deg, #e9f7ef, #d4efdf);
	color: #2d6a4f;
`;

const GpsIcon = styled.span`
	width: 51px;
	font-size: 42px;
	line-height: 52px;
`;

const GpsTitle = styled.h2`
	margin: 0 0 6px;
	font-size: 28px;
	font-weight: 600;
	line-height: 40px;
`;

const GpsText = styled.p`
	margin: 0;
	font-size: 26px;
	line-height: 41px;
`;

const SharingStatus = styled.div`
	height: 83px;
	margin-bottom: 23px;
	padding: 0 31px;
	display: flex;
	align-items: center;
	gap: 20px;
	border-radius: 24px;
	background: #fff;
	box-shadow: 0 4px 16px rgba(44, 62, 80, 0.06);
	color: #2c3e50;
	font-size: 28px;
`;

const StatusDot = styled.span`
	width: 23px;
	height: 23px;
	border-radius: 50%;
	background: #ccc;
`;

const ShareButton = styled.button`
	height: 99px;
	margin-bottom: 23px;
	border-radius: 24px;
	background: #c4622d;
	color: #fff;
	font-size: 31px;
	font-weight: 600;
`;

const TvCard = styled.section`
	margin-bottom: 27px;
	padding: 27px 33px 29px;
	display: flex;
	flex-direction: column;
	align-items: flex-start;
	border-radius: 28px;
	background: #f5ecd7;
`;

const TvTitle = styled.h2`
	margin: 0 0 16px;
	color: #8b7765;
	font-size: 25px;
	font-weight: 600;
	letter-spacing: 2px;
	line-height: 36px;
`;

const TvLink = styled.a`
	margin-bottom: 17px;
	color: #c4622d;
	font-family: 'Liberation Mono', monospace;
	font-size: 28px;
	line-height: 36px;
	text-decoration: none;
`;

const CopyButton = styled.button`
	height: 73px;
	padding: 0 32px;
	border-radius: 18px;
	background: #2c3e50;
	color: #fff;
	font-size: 27px;
	font-weight: 600;
`;

const MapFrame = styled.section`
	position: relative;
	margin-bottom: 31px;
	aspect-ratio: 945 / 765;
	border-radius: 30px;
	overflow: hidden;
`;

const MapSvg = styled.svg`
	width: 100%;
	height: 100%;
`;

const Marker = styled.button<{ $x: number; $y: number }>`
	position: absolute;
	left: ${props => (props.$x / 945) * 100}%;
	top: ${props => (props.$y / 765) * 100}%;
	width: 58px;
	height: 58px;
	transform: translate(-50%, -50%);
	border: 4px solid #c4622d;
	border-radius: 50%;
	background: #fff;
	box-shadow: 0 5px 16px rgba(0, 0, 0, 0.25);
	color: #c4622d;
	font-family: Roboto, sans-serif;
	font-size: 28px;
	font-weight: 700;
`;

const ZoomControl = styled.div`
	position: absolute;
	top: 22px;
	left: 22px;
	border: 4px solid rgba(0, 0, 0, 0.2);
	border-radius: 10px;
	background-clip: padding-box;
`;

const ZoomButton = styled.button`
	width: 68px;
	height: 67px;
	display: flex;
	align-items: center;
	justify-content: center;
	border-radius: 0 0 6px 6px;
	background: #fff;

	&:first-child {
		height: 68px;
		border-bottom: 2px solid #ccc;
		border-radius: 6px 6px 0 0;
	}
`;

const HowCard = styled.section`
	padding: 34px 31px;
	border-radius: 28px;
	background: #fff;
	box-shadow: 0 4px 24px rgba(44, 62, 80, 0.06);
`;

const HowTitle = styled.h2`
	margin: 0 0 12px;
	color: #2c3e50;
	font-size: 27px;
	font-weight: 600;
	line-height: 40px;
`;

const HowText = styled.p`
	margin: 0;
	color: #8b7765;
	font-size: 27px;
	line-height: 46px;
`;

const TabBar = styled.nav`
	position: relative;
	height: 132px;
	flex-shrink: 0;
	display: grid;
	grid-template-columns: repeat(5, 1fr);
	border-top: 2px solid #e5e7e9;
	background: #fff;
`;

const TabItem = styled.button<{ $active?: boolean }>`
	display: flex;
	flex-direction: column;
	align-items: center;
	padding-top: 22px;
	color: #8b7765;
	font-size: 21px;
	line-height: 32px;

	${props =>
		props.$active &&
		css`
			color: #c4622d;
		`}
`;

const TabIcon = styled.span`
	margin-bottom: 6px;
	font-size: 42px;
	line-height: 56px;
`;

const GestureArea = styled.footer`
	height: 54px;
	flex-shrink: 0;
	display: flex;
	align-items: center;
	justify-content: center;
	background: #faf5ed;
`;

const GesturePill = styled.div`
	width: 242px;
	height: 8px;
	border-radius: 4px;
	background: #64615c;
`;

export default App;
